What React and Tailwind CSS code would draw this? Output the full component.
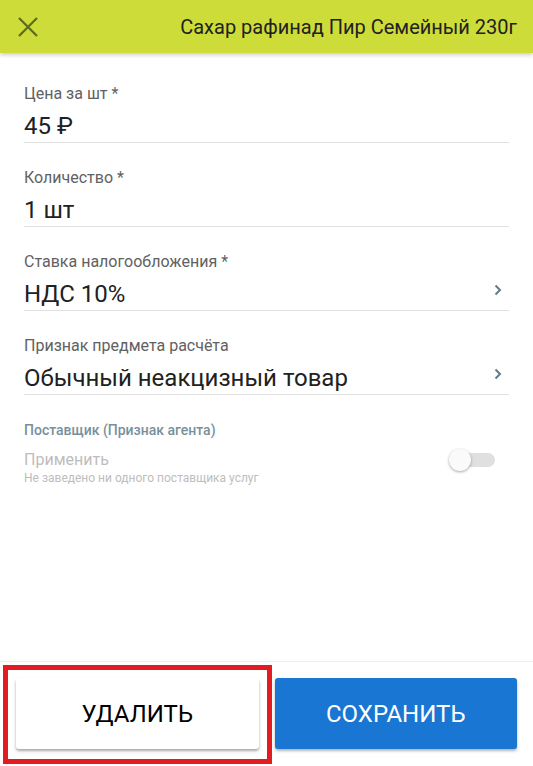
import React from "react";

const font = { fontFamily: "Roboto, 'Noto Sans', sans-serif" };

function Chevron() {
  return (
    <svg width="8" height="12" viewBox="0 0 8 12" className="shrink-0">
      <path d="M1.5 1.5 L6 6 L1.5 10.5" fill="none" stroke="#607d8b" strokeWidth="2" />
    </svg>
  );
}

function Field({ label, value, chevron, first }) {
  return (
    <div className={first ? "" : "mt-[25px]"}>
      <div className="text-base leading-5 text-[#616161]">{label}</div>
      <div className="mt-2 flex items-center justify-between border-b border-[#e0e0e0] pb-[2px]">
        <span className="text-2xl leading-7 text-[#212121]">{value}</span>
        {chevron && (
          <span className="mr-[7px] -mt-[8px]">
            <Chevron />
          </span>
        )}
      </div>
    </div>
  );
}

export default function App() {
  return (
    <div className="flex h-[766px] w-[533px] flex-col bg-white" style={font}>
      <header className="relative z-10 flex h-[53px] shrink-0 items-center justify-between bg-[#cddc39] pl-[18px] pr-4 shadow-[0_2px_4px_rgba(0,0,0,0.2)]">
        <svg width="20" height="20" viewBox="0 0 20 20">
          <path d="M1 1 L19 19 M19 1 L1 19" stroke="#5e6a1b" strokeWidth="2.2" />
        </svg>
        <h1 className="text-xl font-normal text-[#212121]">Сахар рафинад Пир Семейный 230г</h1>
      </header>

      <main className="flex-1 px-6 pt-[31px]">
        <Field first label="Цена за шт *" value="45 ₽" />
        <Field label="Количество *" value="1 шт" />
        <Field label="Ставка налогообложения *" value="НДС 10%" chevron />
        <Field label="Признак предмета расчёта" value="Обычный неакцизный товар" chevron />

        <div className="mt-[25px] text-sm font-medium leading-5 text-[#78909c]">
          Поставщик (Признак агента)
        </div>
        <div className="mt-[10px] flex items-start justify-between">
          <div>
            <div className="text-base leading-5 text-[#bdbdbd]">Применить</div>
            <div className="text-xs leading-4 text-[#bdbdbd]">Не заведено ни одного поставщика услуг</div>
          </div>
          <div className="relative mr-[14px] -mt-px h-[22px] w-[46px]">
            <div className="absolute right-0 top-1 h-[14px] w-[36px] rounded-full bg-[#e0e0e0]" />
            <div className="absolute left-0 top-0 h-[22px] w-[22px] rounded-full bg-[#fafafa] shadow-[0_1px_3px_rgba(0,0,0,0.35)]" />
          </div>
        </div>
      </main>

      <footer className="flex shrink-0 gap-4 border-t border-[#eeeeee] px-4 pb-[17px] pt-4">
        <div className="relative flex-1">
          <button className="flex h-[71px] w-full items-center justify-center rounded-[3px] bg-white text-2xl text-black shadow-[0_2px_3px_rgba(0,0,0,0.35)]">
            УДАЛИТЬ
          </button>
          <div className="pointer-events-none absolute -bottom-[15px] -left-[13px] -right-[13px] -top-[13px] border-[5px] border-[#e31c23]" />
        </div>
        <button className="flex h-[71px] flex-1 items-center justify-center rounded-[3px] bg-[#1976d2] text-2xl text-white shadow-[0_2px_3px_rgba(0,0,0,0.3)]">
          СОХРАНИТЬ
        </button>
      </footer>
    </div>
  );
}
